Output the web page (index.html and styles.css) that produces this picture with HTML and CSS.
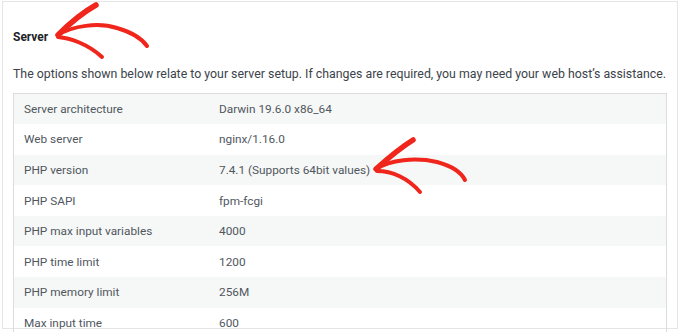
FILE: index.html
```html
<html>
    <head>
        <title>Site Health Info</title>
        <link rel="stylesheet" href="styles.css">
    </head>
    <body>
        <div class="panel">
            <h3 class="section-title">Server</h3>
            <p class="section-desc">The options shown below relate to your server setup. If changes are required, you may need your web host’s assistance.</p>
            <table class="info-table">
                <tr><td class="label">Server architecture</td><td>Darwin 19.6.0 x86_64</td></tr>
                <tr><td class="label">Web server</td><td>nginx/1.16.0</td></tr>
                <tr><td class="label">PHP version</td><td>7.4.1 (Supports 64bit values)</td></tr>
                <tr><td class="label">PHP SAPI</td><td>fpm-fcgi</td></tr>
                <tr><td class="label">PHP max input variables</td><td>4000</td></tr>
                <tr><td class="label">PHP time limit</td><td>1200</td></tr>
                <tr><td class="label">PHP memory limit</td><td>256M</td></tr>
                <tr class="last"><td class="label">Max input time</td><td>600</td></tr>
            </table>
        </div>
        <svg class="arrows" width="680" height="333" viewBox="0 0 680 333">
            <g fill="none" stroke="#f0261c" stroke-linecap="round" stroke-linejoin="round">
                <path d="M58 35 C66 27 80 14 96 5" stroke-width="5.5"/>
                <path d="M58 35 C72 26 98 22 117 28 C131 32 142 39 147 46" stroke-width="4"/>
                <path d="M58 37 C70 38 88 44 102 57" stroke-width="4"/>
                <path d="M376 169 C386 160 400 148 413 140" stroke-width="5.5"/>
                <path d="M376 169 C390 160 415 157 437 162 C452 166 461 172 465 180" stroke-width="4"/>
                <path d="M377 171 C392 171 408 178 420 192" stroke-width="4"/>
            </g>
        </svg>
    </body>
</html>
```

FILE: styles.css
```css
body{
    margin: 0;
    font-family: "Roboto", "Liberation Sans", sans-serif;
    background: #ffffff;
    position: relative;
    height: 333px;
    overflow: hidden;
}
.panel{
    margin: 1px 2px 0 2px;
    border: 1px solid #e4e5e7;
    padding: 0 10px;
    height: 328px;
    box-sizing: border-box;
}
.section-title{
    margin: 0;
    padding-top: 26px;
    font-size: 12px;
    font-weight: 700;
    line-height: 18px;
    color: #1d2327;
}
.section-desc{
    margin: 0;
    padding-top: 19px;
    font-size: 12.35px;
    line-height: 18px;
    color: #3c434a;
}
.info-table{
    margin-top: 10px;
    width: 100%;
    border-collapse: collapse;
    border: 1px solid #dcdcde;
    border-bottom: none;
    font-size: 11.8px;
    color: #50575e;
}
.info-table td{
    height: 30.6px;
    padding: 0 10px;
}
.info-table tr:nth-child(odd){
    background: #f6f7f7;
}
.info-table .last td{
    height: 24px;
    padding-top: 6px;
}
.info-table .label{
    width: 175px;
}
.arrows{
    position: absolute;
    left: 0;
    top: 0;
    pointer-events: none;
}
```
